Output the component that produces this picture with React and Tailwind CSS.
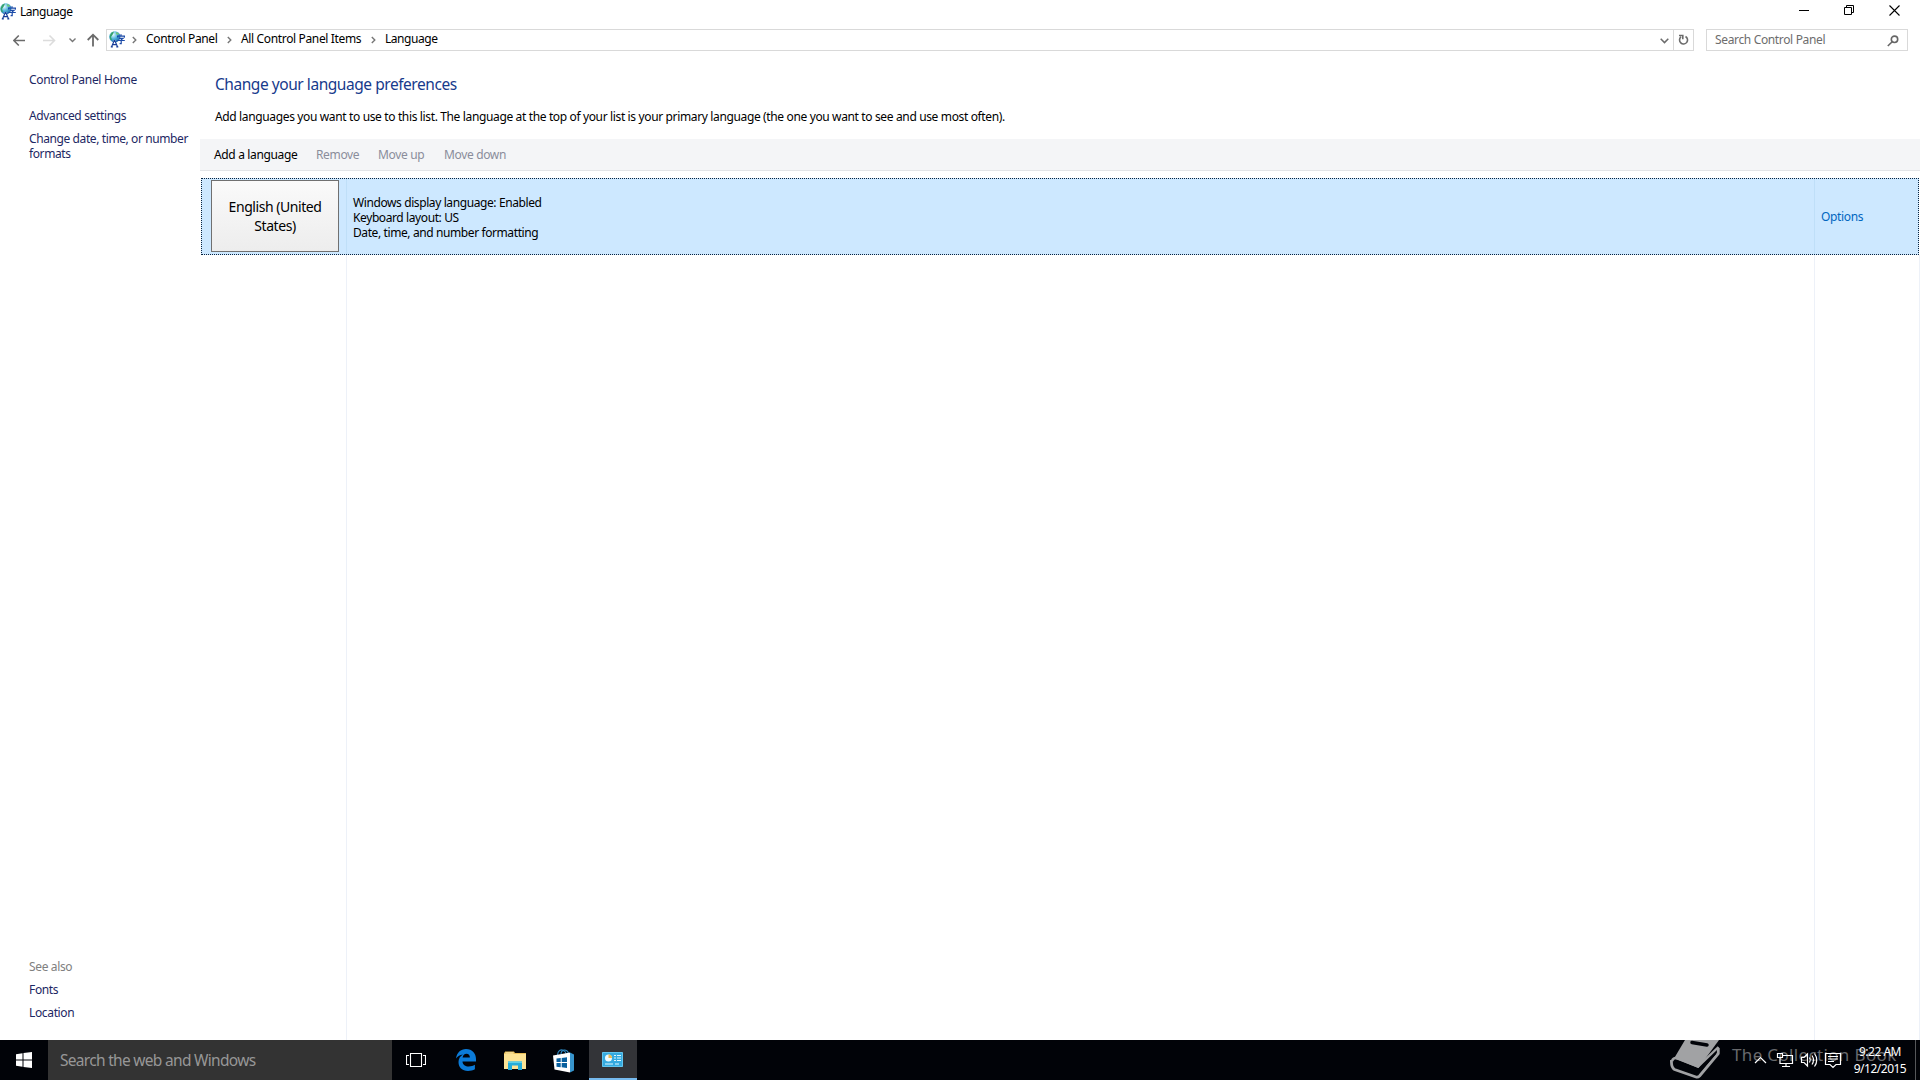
import React from 'react';

// Toolbar entries that need a selected language
const TASK_ACTIONS = [
  { label: 'Remove', className: 'ml-[18px] w-[44px]' },
  { label: 'Move up', className: 'ml-[18px] w-[48px]' },
  { label: 'Move down', className: 'ml-[18px] w-[64px]' },
];

const LanguageIcon = () => (
  <svg width="16" height="17" viewBox="0 0 16 17" className="shrink-0">
    <defs>
      <radialGradient id="globe" cx="0.35" cy="0.3" r="0.75">
        <stop offset="0" stopColor="#e8fbff" />
        <stop offset="0.5" stopColor="#55b6dc" />
        <stop offset="1" stopColor="#1763a8" />
      </radialGradient>
    </defs>
    <circle cx="5.8" cy="5.8" r="5.6" fill="url(#globe)" />
    <path d="M1 4Q2 1 5 .6L4 3L2 6L3 9L1.5 9Q0 6 1 4Z" fill="#35a26c" />
    <path d="M7 1L10 2.5L9 4L7 3Z" fill="#72c779" />
    <path d="M2.8 16.5L5.3 9.5h.6l2.6 7z" stroke="#fff" strokeWidth="1.2" fill="#fff" />
    <path d="M2.600 15.800L5.300 9.500h.5l2.700 6.300M3.700 13.600h3.800M1.800 15.900h2M7.300 15.900h2" stroke="#173c98" strokeWidth="1.2" fill="none" />
    <path d="M12 3.200v1.800M8.600 6.500V5.200h6.800v1.300M10 7.300h4l-1.800 1.400v4h-1.600M8.300 9.500h7.500" stroke="#1d4ba8" strokeWidth="1.200" fill="none" />
  </svg>
);

const Crumb = ({ children, className }) => (
  <div className="flex items-center">
    <svg width="5" height="8" viewBox="0 0 5 8" className="shrink-0">
      <path d="M.8 1L3.8 4L.8 7" stroke="#777" strokeWidth="1.4" fill="none" />
    </svg>
    <span className={className}>{children}</span>
  </div>
);

function TitleBar() {
  return (
    <div className="flex h-6 items-center justify-between">
      <div className="flex items-center gap-1 pb-[2px]">
        <LanguageIcon />
        <span className="pt-[2px] tracking-[-0.45px]">Language</span>
      </div>
      <div className="mr-[20px] flex items-center gap-[35px] pb-1">
        <svg width="10" height="10" viewBox="0 0 10 10">
          <path d="M0 5.5h10" stroke="#000" />
        </svg>
        <svg width="10" height="10" viewBox="0 0 10 10" fill="none" stroke="#000">
          <path d="M.5 2.5h7v7h-7zM2.5 2.5v-2h7v7h-2" />
        </svg>
        <svg width="11" height="11" viewBox="0 0 11 11" fill="none" stroke="#000" strokeWidth="1.1">
          <path d="M.5 .5l10 10M10.500 .5l-10 10" />
        </svg>
      </div>
    </div>
  );
}

function AddressBar() {
  return (
    <div className="mt-[5px] flex h-[22px] items-center">
      <svg width="93" height="16" viewBox="0 0 93 16" fill="none" className="ml-[13px] shrink-0">
        <path d="M12 8.500H1M5.800 3.500L.8 8.500l5 5" stroke="#6b6b6b" strokeWidth="1.6" />
        <path d="M30 8.500H41M36.500 3.500l5 5-5 5" stroke="#dcdcdc" strokeWidth="1.6" />
        <path d="M56.500 6.500l3 3 3-3" stroke="#777" strokeWidth="1.4" />
        <path d="M80 14.500V3M74.700 8L80 2.700L85.300 8" stroke="#6b6b6b" strokeWidth="1.8" />
      </svg>
      <div className="flex h-[22px] w-[1588px] items-center border border-[#d9d9d9]">
        <div className="flex flex-1 items-center pb-px pl-[2px]">
          <LanguageIcon />
          <div className="ml-[7px] flex gap-[9px]">
            <Crumb className="mb-px ml-[9px] w-[72px]">Control Panel</Crumb>
            <Crumb className="mb-px ml-[9px] w-[121px]">All Control Panel Items</Crumb>
            <Crumb className="mb-px ml-[9px] tracking-[-0.45px]">Language</Crumb>
          </div>
        </div>
        <svg width="9" height="6" viewBox="0 0 9 6" className="mt-[2px] mr-[4px]">
          <path d="M.7 .8L4.500 4.600L8.300 .8" stroke="#6b6b6b" strokeWidth="1.5" fill="none" />
        </svg>
        <div className="flex h-full w-[20px] items-center justify-center border-l border-[#d9d9d9]">
          <svg width="11" height="12" viewBox="0 0 11 12" fill="none" stroke="#6b6b6b" strokeWidth="1.6">
            <path d="M7.500 2.500A4 4 0 1 1 3 2.900M1 1.500h3.800v3.800" />
          </svg>
        </div>
      </div>
      <div className="ml-3 flex h-[22px] w-[202px] items-center justify-between border border-[#d9d9d9] pr-[8px] pl-[8px] text-[#6d6d6d]">
        <span>Search Control Panel</span>
        <svg width="12" height="12" viewBox="0 0 12 12" fill="none" stroke="#666" strokeWidth="1.6" className="mt-px">
          <circle cx="7.500" cy="4.300" r="3.200" />
          <path d="M5.200 6.700L.8 11" />
        </svg>
      </div>
    </div>
  );
}

function Sidebar() {
  return (
    <aside className="flex w-[200px] shrink-0 flex-col pl-[29px] leading-[15px] text-[#1d2763]">
      <a className="mt-[21px] tracking-[-0.3px]">Control Panel Home</a>
      <a className="mt-[21px]">Advanced settings</a>
      <a className="mt-[8px] tracking-[-0.4px]">
        Change date, time, or number
        <br />
        formats
      </a>
      <div className="mt-auto mb-[20px] flex flex-col gap-2">
        <span className="text-[#808080]">See also</span>
        <a>Fonts</a>
        <a>Location</a>
      </div>
    </aside>
  );
}

function LanguageList() {
  return (
    <div className="mt-[7px] flex flex-1 flex-col">
      <div className="ml-px flex h-[77px] w-[1718px] border border-dotted border-[#0a2440] bg-[#cde8ff]">
        <div className="flex w-[145px] shrink-0 border-r border-[#bfdff8] pt-px pl-[9px]">
          <div className="flex h-[72px] w-[128px] items-center justify-center border border-[#707070] bg-gradient-to-b from-[#fafafa] to-[#ededed] text-center text-[14px] leading-[19px] tracking-[-0.45px]">
            English (United
            <br />
            States)
          </div>
        </div>
        <div className="flex flex-1 flex-col justify-center pt-px pl-[6px] leading-[15px] tracking-[-0.4px]">
          <span>Windows display language: Enabled</span>
          <span>Keyboard layout: US</span>
          <span>Date, time, and number formatting</span>
        </div>
        <div className="flex w-[104px] items-center border-l border-[#bfdff8] pl-[6px] text-[#0066bf]">
          Options
        </div>
      </div>
      {/* empty column area */}
      <div className="flex flex-1">
        <div className="w-[147px] border-r border-[#edf1f8]" />
        <div className="flex-1" />
        <div className="w-[106px] border-x border-[#edf1f8]" />
      </div>
    </div>
  );
}

function Taskbar() {
  return (
    <footer className="relative flex h-10 bg-[#010308]">
      <div className="flex w-12 items-center justify-center">
        <svg width="16" height="16" viewBox="0 0 16 16" fill="#fff">
          <path d="M0 2.200L6.500 1.300V7.500H0zM7.500 1.100L16 0v7.500H7.500zM0 8.500h6.500v6.200L0 13.800zM7.500 8.500H16V16L7.500 14.900z" />
        </svg>
      </div>
      <div className="flex w-[344px] items-center bg-[#333333] pt-[2px] pl-3 text-[15.500px] tracking-[-0.7px] text-[#979797]">
        Search the web and Windows
      </div>
      <div className="flex w-12 items-center justify-center">
        <svg width="20" height="14" viewBox="0 0 20 14" fill="none" stroke="#fff" strokeWidth="1.1">
          <path d="M4.500 .5h11v13h-11zM3 2.500H.5v9H3M17 2.500h2.500v9H17" />
        </svg>
      </div>
      <div className="flex w-[51px] items-center justify-center">
        <svg width="20" height="22" viewBox="0 0 20 22" fill="#0b7bd8">
          <path d="M0 9.600C.8 3.500 4.700 0 10 0c6.300 0 10 4.500 10 10v2.500H6.500c.2 3.300 2.800 5 6.300 5 2.300 0 4.300-.7 6.100-1.700v4.500C17 21.400 14.700 22 12 22c-5.800 0-9.500-3.500-9.500-9 0-3.300 1.700-5.900 4.300-7.500C4 6 1.700 7.300 0 9.600zM6.600 8.500h7.300c0-2.300-1.300-3.800-3.400-3.800-2.200 0-3.500 1.500-3.900 3.800z" />
        </svg>
      </div>
      <div className="flex w-[48px] items-center justify-center">
        <svg width="22" height="19" viewBox="0 0 22 19">
          <path d="M0 1.500h1V.5h9l1 1.500h11v16H0z" fill="#e8bd55" />
          <path d="M0 3h22v15H0z" fill="#fce394" />
          <path d="M1.500 1.500h8v1h-8z" fill="#fff3c0" />
          <path d="M4 19v-8.500h14V19h-4v-4.500H8V19z" fill="#25acd8" />
          <path d="M4 10.500h14v1.500H4z" fill="#5bd0e9" />
        </svg>
      </div>
      <div className="flex w-[50px] items-center justify-center pr-px">
        <svg width="21" height="25" viewBox="0 0 21 25">
          <path d="M4.500 7.500C4.500 2.500 8 1 10.500 2.500C12.500 3.500 13 5 13 6M8 6C8 2 13 0 15.500 5" fill="none" stroke="#2d86bf" strokeWidth="1.1" />
          <path d="M0 7.500L17 4.500v20L1.500 21.500z" fill="#fff" />
          <path d="M17 4.500L21 6.500v16L17 24.500z" fill="#3794cc" />
          <path d="M3.500 10.500L7.700 10v4H3.500zM8.700 9.900L14 9.200V14H8.700zM3.500 15h4.200v4.200l-4.200-.5zM8.700 15H14v5l-5.300-.7z" fill="#075f9e" />
        </svg>
      </div>
      <div className="flex w-[48px] items-center justify-center border-b-2 border-[#76b9ed] bg-[#333438] pt-px pr-px">
        <svg width="21" height="15" viewBox="0 0 21 15">
          <rect width="21" height="15" rx=".7" fill="#62c5ee" />
          <rect x="1" y="1" width="19" height="13" fill="#35aadf" />
          <circle cx="6.500" cy="6" r="3.500" fill="#eefaff" />
          <path d="M6.500 6V2.500A3.500 3.500 0 0 1 10 6z" fill="#f2b94b" />
          <path d="M12 3.500h2M15 3.500h4M12 6h2M15 6h4M12 8.500h2M15 8.500h4M3 12h8M13 12h4" stroke="#dff7ff" strokeWidth="1.2" />
        </svg>
      </div>

      {/* watermark overlapping the tray */}
      <div className="absolute top-0 left-[1670px] flex">
        <svg width="52" height="40" viewBox="0 0 52 40">
          <path d="M15 0H49L28.500 28L4 18.500z" fill="#a1a2a4" />
          <path d="M48.300 8v5.500L29.500 36Q28 37.500 26 37L4.500 29.500Q1 27.500 1.500 20" fill="none" stroke="#a1a2a4" strokeWidth="2.800" strokeLinejoin="round" />
          <path d="M2 21Q3.500 17 8 18.500L28 26.500L48.500 7" fill="none" stroke="#a1a2a4" strokeWidth="2.400" />
          <path d="M5 22Q6.500 20.500 9 21.500L28.500 29.500L46 12V14L28 34.500L6.500 27Q4.500 25.500 5 22z" fill="#010308" />
          <path d="M22 2.500l15 2.500" stroke="#010308" strokeWidth="3.500" strokeLinecap="round" />
        </svg>
        <span className="mt-[3px] ml-[10px] text-[17px] leading-6 tracking-[0.35px] text-[#68696c]">The Collection Book</span>
      </div>

      <div className="relative ml-auto flex items-center text-white">
        <svg width="90" height="20" viewBox="0 0 90 20" fill="none" stroke="#fff" strokeWidth="1.2" className="mr-[9px]">
          <path d="M1 13l5.500-5.500L12 13" />
          <path d="M28 5.500h10.500v8H26v-3M32 13.500v3M28 16.500h8M23.500 3.500h5v4h-5zM26 7.500v3" />
          <path d="M47.500 7.500h2.500l3.500-3.500v12L50 12.500h-2.500zM55.500 7.500q1.500 2.500 0 5M58 5.500q3 4.500 0 9M60.500 3.500q4.500 6.500 0 13" />
          <path d="M71.500 3.500h15v11H82l-3 3-3-3h-4.500zM74 6.500h10M74 9h10M74 11.500h6" />
        </svg>
        <div className="mr-[8px] w-[54px] text-center leading-[17px] tracking-[-0.5px]">
          9:22 AM
          <br />
          9/12/2015
        </div>
        <div className="h-full w-[5px] border-l border-[#55575a]" />
      </div>
    </footer>
  );
}

export default function App() {
  return (
    <div className="flex h-[1080px] w-[1920px] flex-col overflow-hidden bg-white font-['Noto_Sans',sans-serif] text-[12px] tracking-[-0.35px] whitespace-nowrap text-black">
      <TitleBar />
      <AddressBar />
      <div className="flex min-h-0 flex-1">
        <Sidebar />
        <main className="flex flex-1 flex-col">
          <h1 className="mt-[21px] ml-[15px] text-[15.500px] leading-6 tracking-[-0.45px] text-[#173a8c]">
            Change your language preferences
          </h1>
          <p className="mt-[13px] ml-[15px] leading-[15px] tracking-[-0.36px]">
            Add languages you want to use to this list. The language at the top of your list is your primary language (the one you want to see and use most often).
          </p>
          <div className="mt-[15px] flex h-8 items-center border-b border-[#e2e4e7] bg-[#f4f5f7] pl-[14px] text-[#8a8d9b]">
            <span className="w-[84px] text-black">Add a language</span>
            {TASK_ACTIONS.map((action) => (
              <span key={action.label} className={action.className}>
                {action.label}
              </span>
            ))}
          </div>
          <LanguageList />
        </main>
      </div>
      <Taskbar />
    </div>
  );
}
